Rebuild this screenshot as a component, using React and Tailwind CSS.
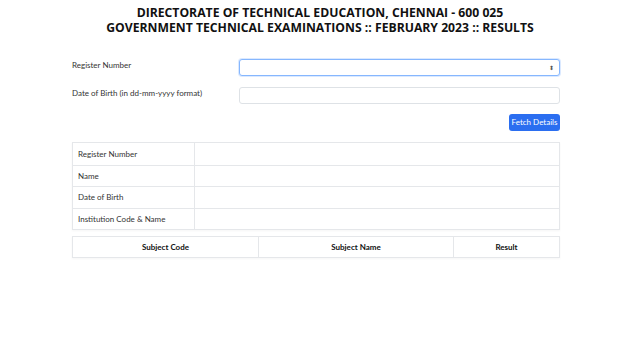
import React from "react";

export default function App() {
  const font = { fontFamily: '"Open Sans", "Noto Sans", sans-serif' };
  const small = { fontFamily: 'Lato, "Open Sans", sans-serif' };
  return (
    <div className="w-[640px] h-[360px] bg-white text-[#212529]" style={font}>
      <div className="pt-[5px] text-center font-bold text-[12.2px] leading-[15px] text-[#111]">
        <div>DIRECTORATE OF TECHNICAL EDUCATION, CHENNAI - 600 025</div>
        <div>GOVERNMENT TECHNICAL EXAMINATIONS :: FEBRUARY 2023 :: RESULTS</div>
      </div>
      <div className="ml-[72px] w-[488px] mt-[24px]" style={small}>
        <div className="flex items-start h-[17px]">
          <div className="w-[167px] text-[8px] leading-[10px] pt-[1px] text-[#333]">Register Number</div>
          <div className="flex-1 h-[17px] rounded-[3px] border border-[#86b7fe] shadow-[0_0_0_1px_rgba(13,110,253,0.15)] bg-white flex items-center justify-end pr-[5px]">
            <span className="text-[6px] leading-[6px] text-[#555]">⬍</span>
          </div>
        </div>
        <div className="flex items-start h-[17px] mt-[11px]">
          <div className="w-[167px] text-[8px] leading-[10px] pt-[1px] text-[#333]">Date of Birth (in dd-mm-yyyy format)</div>
          <div className="flex-1 h-[17px] rounded-[3px] border border-[#dee2e6] bg-white"></div>
        </div>
        <div className="flex justify-end mt-[10px]">
          <button className="w-[51px] h-[17px] rounded-[3px] bg-[#2b6ef0] text-white text-[8px] leading-[17px]">Fetch Details</button>
        </div>
        <div className="mt-[11px] border border-[#e5e7ea] shadow-[0_1px_2px_rgba(0,0,0,0.04)]">
          {["Register Number", "Name", "Date of Birth", "Institution Code & Name"].map((l, i) => (
            <div key={l} className={`flex h-[21.5px] ${i > 0 ? "border-t border-[#e5e7ea]" : ""}`}>
              <div className="w-[122px] border-r border-[#e5e7ea] pl-[5px] flex items-center text-[8px] text-[#333]">{l}</div>
              <div className="flex-1"></div>
            </div>
          ))}
        </div>
        <div className="mt-[6px] border border-[#e5e7ea] shadow-[0_1px_2px_rgba(0,0,0,0.04)] flex h-[22px] text-[8px] font-bold text-[#111]">
          <div className="w-[186px] border-r border-[#e5e7ea] flex items-center justify-center">Subject Code</div>
          <div className="w-[195px] border-r border-[#e5e7ea] flex items-center justify-center">Subject Name</div>
          <div className="flex-1 flex items-center justify-center">Result</div>
        </div>
      </div>
    </div>
  );
}
